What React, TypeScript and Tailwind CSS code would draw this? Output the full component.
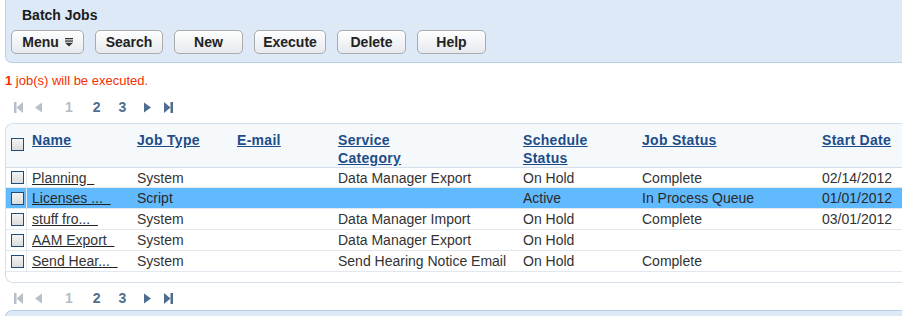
import React from "react";

type Job = {
  name: string;
  type: string;
  email: string;
  category: string;
  schedule: string;
  status: string;
  start: string;
  selected?: boolean;
  h: string;
};

const jobs: Job[] = [
  { name: "Planning\u00a0\u00a0", type: "System", email: "", category: "Data Manager Export", schedule: "On Hold", status: "Complete", start: "02/14/2012", h: "h-[20px]" },
  { name: "Licenses ...\u00a0\u00a0", type: "Script", email: "", category: "", schedule: "Active", status: "In Process Queue", start: "01/01/2012", selected: true, h: "h-[21px]" },
  { name: "stuff fro...\u00a0\u00a0", type: "System", email: "", category: "Data Manager Import", schedule: "On Hold", status: "Complete", start: "03/01/2012", h: "h-[21px]" },
  { name: "AAM Export\u00a0\u00a0", type: "System", email: "", category: "Data Manager Export", schedule: "On Hold", status: "", start: "", h: "h-[21px]" },
  { name: "Send Hear...\u00a0\u00a0", type: "System", email: "", category: "Send Hearing Notice Email", schedule: "On Hold", status: "Complete", start: "", h: "h-[21px]" },
];

const cols = "grid grid-cols-[21px_105px_100px_101px_185px_119px_180px_1fr]";

function Checkbox() {
  return (
    <div className="ml-[5px] h-[13px] w-[13px] border border-[#1f4c7c] bg-gradient-to-b from-[#f4f4f4] to-[#dcdcdc]" />
  );
}

function Button({ label, width, menu }: { label: string; width: string; menu?: boolean }) {
  return (
    <div
      className={`${width} flex h-[24px] items-center justify-center gap-[6px] rounded-[5px] border border-[#ababab] bg-gradient-to-b from-[#fefefe] to-[#e6e9ee] text-[14px] font-bold text-[#222]`}
    >
      {label}
      {menu && (
        <svg width="8" height="9" viewBox="0 0 8 9" className="mt-[1px]">
          <rect x="0" y="0" width="8" height="1.3" fill="#333" />
          <rect x="0" y="2.4" width="8" height="1.3" fill="#333" />
          <polygon points="0,4.8 8,4.8 4,8.6" fill="#333" />
        </svg>
      )}
    </div>
  );
}

function Pager() {
  const off = "#b7bfc8";
  const on = "#4f6d8e";
  return (
    <div className="flex h-[16px] items-center text-[14px] font-bold leading-[16px]">
      <svg width="9" height="11" viewBox="0 0 9 11" className="ml-[14px]">
        <rect x="0" y="0" width="2.5" height="11" fill={off} />
        <polygon points="9,0 9,11 2.5,5.5" fill={off} />
      </svg>
      <svg width="7" height="11" viewBox="0 0 7 11" className="ml-[12px]">
        <polygon points="7,0.5 7,10.5 0,5.5" fill={off} />
      </svg>
      <span className="ml-[23px] text-[#b3bdc7]">1</span>
      <span className="ml-[20px] text-[#4f6d8e]">2</span>
      <span className="ml-[18px] text-[#4f6d8e]">3</span>
      <svg width="7" height="11" viewBox="0 0 7 11" className="ml-[18px]">
        <polygon points="0,0.5 0,10.5 7,5.5" fill={on} />
      </svg>
      <svg width="9" height="11" viewBox="0 0 9 11" className="ml-[13px]">
        <polygon points="0,0 0,11 6.5,5.5" fill={on} />
        <rect x="6.5" y="0" width="2.5" height="11" fill={on} />
      </svg>
    </div>
  );
}

export default function App() {
  return (
    <div className="h-[316px] w-[902px] overflow-hidden bg-white font-['Liberation_Sans',Arial,sans-serif] text-[#333]">
      {/* toolbar panel */}
      <div className="ml-[5px] h-[63px] rounded-bl-[7px] border-b border-l border-[#b8cfe7] bg-[#dde9f6]">
        <div className="pl-[16px] pt-[7px] text-[14px] font-bold leading-[16px] text-[#1b1b1b]">Batch Jobs</div>
        <div className="ml-[5px] mt-[7px] flex gap-[11px]">
          <Button label="Menu" width="w-[73px]" menu />
          <Button label="Search" width="w-[68px]" />
          <Button label="New" width="w-[69px]" />
          <Button label="Execute" width="w-[72px]" />
          <Button label="Delete" width="w-[69px]" />
          <Button label="Help" width="w-[69px]" />
        </div>
      </div>

      <div className="mt-[10px] h-[16px] pl-[5px] text-[13px] leading-[16px] text-[#f53000]">
        <span className="font-bold">1</span> job(s) will be executed.
      </div>

      <div className="mt-[10px]">
        <Pager />
      </div>

      {/* jobs table */}
      <div className="ml-[5px] mt-[8px] rounded-l-[8px] border-y border-l border-[#d3dfeb]">
        <div className={`${cols} h-[44px] rounded-tl-[8px] border-b border-[#d3dfeb] bg-[#f6f9fc] text-[14px] font-bold leading-[18px] tracking-[0.3px] text-[#1d4d88]`}>
          <div className="pt-[14px]">
            <Checkbox />
          </div>
          <div className="pl-[5px] pt-[7px] underline">Name</div>
          <div className="pl-[5px] pt-[7px] underline">Job Type</div>
          <div className="pl-[5px] pt-[7px] underline">E-mail</div>
          <div className="pl-[5px] pt-[7px] underline">
            Service
            <br />
            Category
          </div>
          <div className="pl-[5px] pt-[7px] underline">
            Schedule
            <br />
            Status
          </div>
          <div className="pl-[5px] pt-[7px] underline">Job Status</div>
          <div className="pl-[5px] pt-[7px] underline">Start Date</div>
        </div>
        {jobs.map((j) => (
          <div
            key={j.name}
            className={`${cols} ${j.h} items-center border-b border-[#e1e8ef] text-[14px] leading-[16px] ${j.selected ? "bg-[#61b9fe] text-[#2a2a2a]" : "text-[#333]"}`}
          >
            <div className="flex h-full items-center border-r border-[#e1e8ef]">
              <Checkbox />
            </div>
            <div className="whitespace-nowrap pl-[5px]">
              <span className="underline decoration-[#222]">{j.name}</span>
            </div>
            <div className="pl-[5px]">{j.type}</div>
            <div className="pl-[5px]">{j.email}</div>
            <div className="whitespace-nowrap pl-[5px]">{j.category}</div>
            <div className="pl-[5px]">{j.schedule}</div>
            <div className="pl-[5px]">{j.status}</div>
            <div className="pl-[5px]">{j.start}</div>
          </div>
        ))}
        <div className="h-[10px]" />
      </div>

      <div className="mt-[7px]">
        <Pager />
      </div>

      <div className="ml-[5px] mt-[4px] h-[20px] rounded-tl-[7px] border-l border-t border-[#b8cfe7] bg-[#dde9f6]" />
    </div>
  );
}
